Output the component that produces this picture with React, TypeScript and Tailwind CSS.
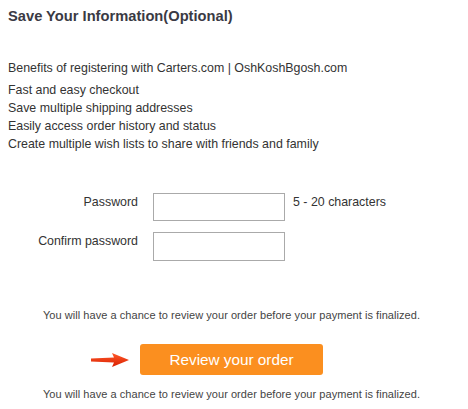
const benefits = [
  "Fast and easy checkout",
  "Save multiple shipping addresses",
  "Easily access order history and status",
  "Create multiple wish lists to share with friends and family",
];

const Arrow = () => (
  <svg width="40" height="16" viewBox="0 0 40 16" className="block">
    <defs>
      <linearGradient id="arrowFill" x1="0" y1="0" x2="0" y2="1">
        <stop offset="0" stopColor="#ff5a2a" />
        <stop offset="1" stopColor="#d81e00" />
      </linearGradient>
    </defs>
    <path
      d="M1 6.5 L24 5.5 L22 1 L39 8 L22 15 L24 10.5 L1 9.5 Z"
      fill="url(#arrowFill)"
    />
  </svg>
);

export default function App() {
  return (
    <div className="w-[468px] h-[409px] bg-white text-[#333] font-['Liberation_Sans',Arial,sans-serif] overflow-hidden">
      <h2 className="pl-2 pt-[7px] text-[14.7px] font-bold leading-[18px] text-[#3a3a44]">
        Save Your Information(Optional)
      </h2>

      <div className="pl-2 mt-[34px] text-[12.4px] leading-[18px]">
        <p>Benefits of registering with Carters.com | OshKoshBgosh.com</p>
        <ul className="mt-1">
          {benefits.map((b) => (
            <li key={b}>{b}</li>
          ))}
        </ul>
      </div>

      {/* password fields */}
      <div className="mt-[40px] flex flex-col gap-[11px] text-[12.4px]">
        <div className="flex items-start">
          <label className="w-[138px] text-right pt-[1px] leading-[16px]">Password</label>
          <input
            type="password"
            className="ml-[15px] w-[132px] h-[28px] border border-[#aaa] bg-white"
          />
          <span className="ml-[8px] pt-[1px] leading-[16px]">5 - 20 characters</span>
        </div>
        <div className="flex items-start">
          <label className="w-[138px] text-right pt-[1px] leading-[16px]">Confirm password</label>
          <input
            type="password"
            className="ml-[15px] w-[132px] h-[29px] border border-[#aaa] bg-white"
          />
        </div>
      </div>

      <p className="mt-[47px] text-center text-[11px] leading-[14px] text-[#444] tracking-[0.05px] pr-[5px]">
        You will have a chance to review your order before your payment is finalized.
      </p>

      <div className="mt-[22px] flex items-center pl-[90px]">
        <Arrow />
        <button className="ml-[10px] w-[183px] h-[31px] rounded-[3px] bg-[#fb8f1f] text-white text-[15.3px] leading-[31px] text-center">
          Review your order
        </button>
      </div>

      <p className="mt-[12px] text-center text-[11px] leading-[14px] text-[#444] tracking-[0.05px] pr-[5px]">
        You will have a chance to review your order before your payment is finalized.
      </p>
    </div>
  );
}
